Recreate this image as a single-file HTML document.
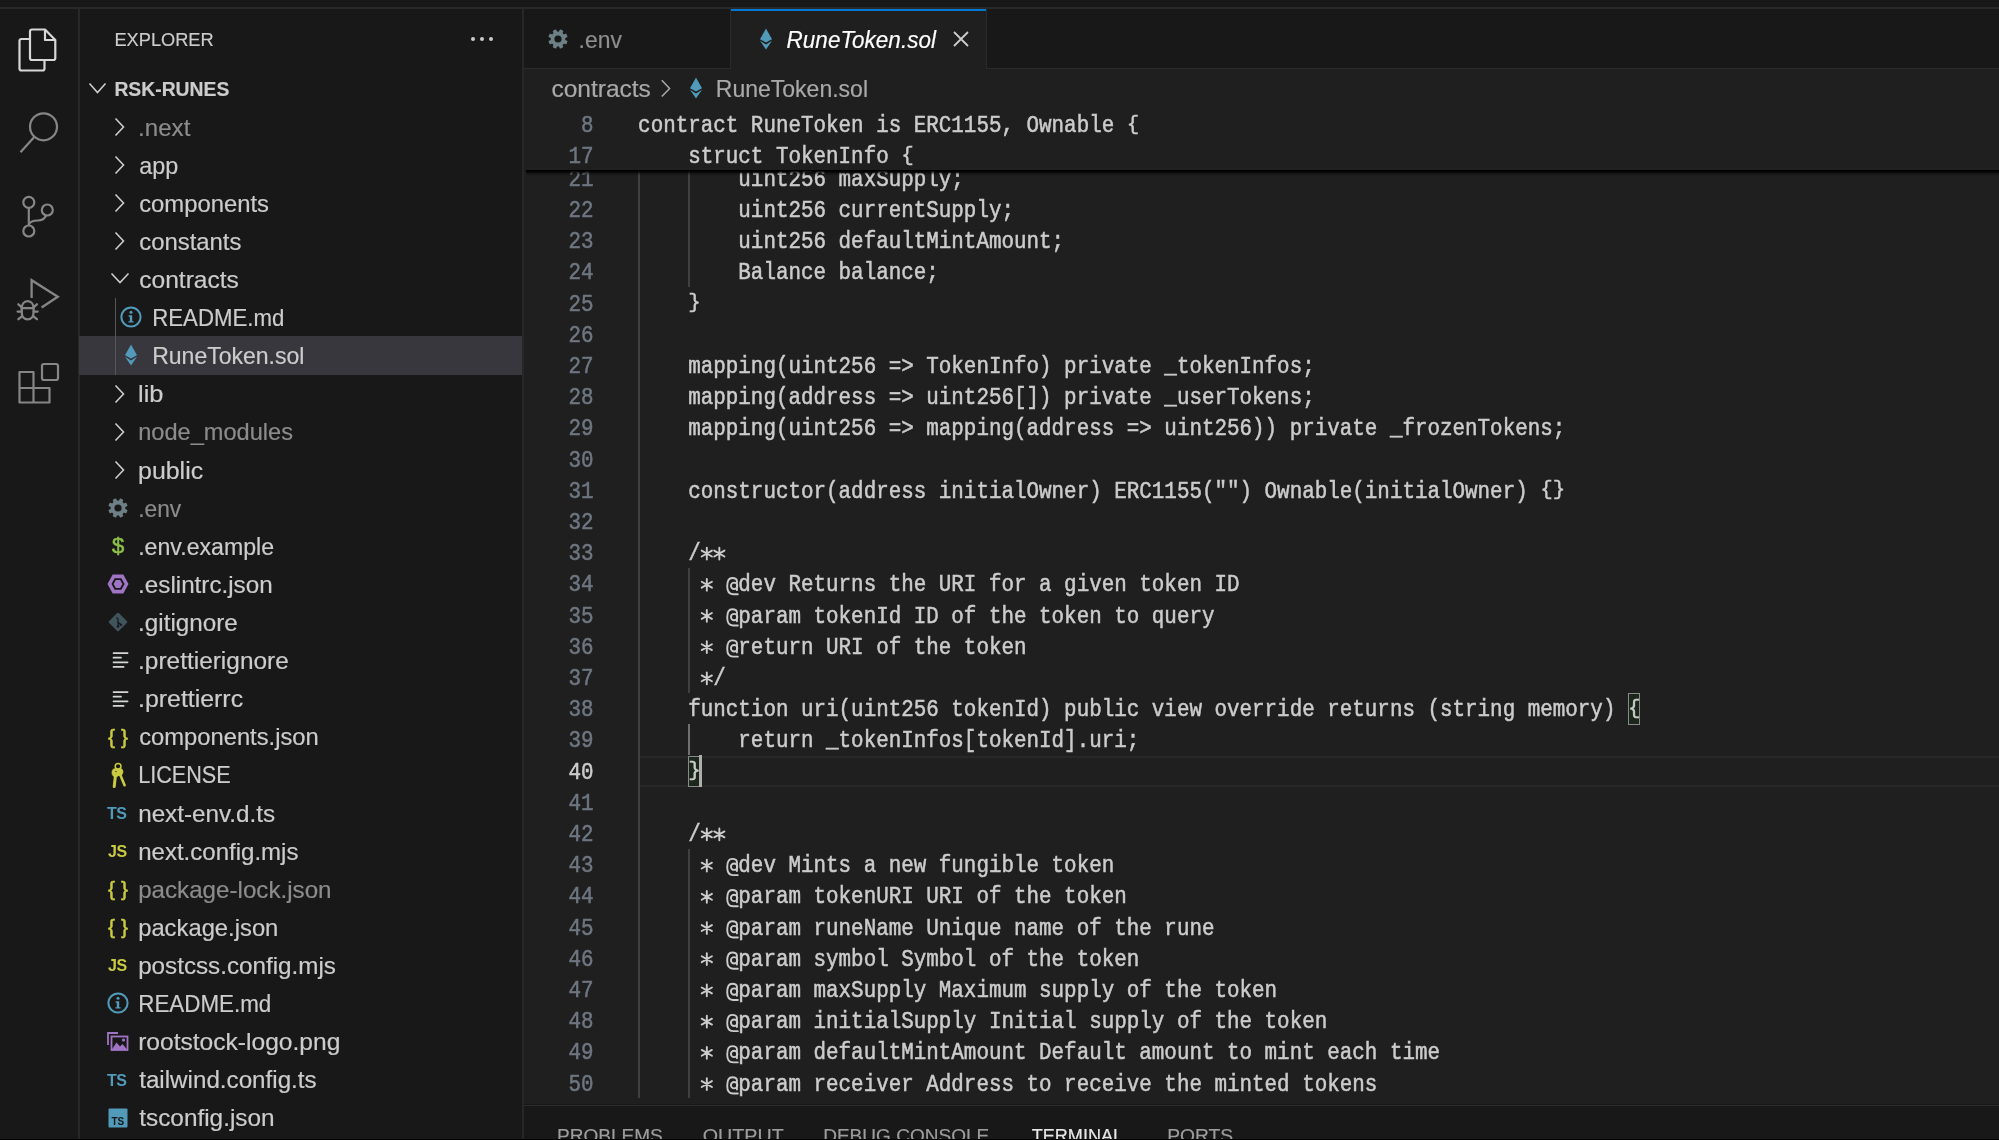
<!DOCTYPE html><html><head><meta charset="utf-8"><style>
*{margin:0;padding:0;box-sizing:border-box}
html,body{width:1999px;height:1140px;overflow:hidden;background:#181818}
#wrap{position:absolute;left:0;top:0;width:1999px;height:1140px;will-change:transform;overflow:hidden}
.a{position:absolute}
svg{position:absolute;left:0;top:0;overflow:visible}
text{font-family:"Liberation Sans",sans-serif}
text.m{font-family:"Liberation Mono",monospace;white-space:pre;stroke:currentColor;stroke-width:0.45px}
text.s{stroke:currentColor;stroke-width:0.18px}
</style></head><body><div id="wrap"><div class="a" style="left:0px;top:0px;width:1999px;height:7px;background:#181818;"></div>
<div class="a" style="left:0px;top:7px;width:1999px;height:2px;background:#292929;"></div>
<div class="a" style="left:78px;top:9px;width:1.6px;height:1131px;background:#282828;"></div>
<div class="a" style="left:522.1px;top:9px;width:1.7px;height:1131px;background:#272727;"></div>
<div class="a" style="left:524px;top:69px;width:1475px;height:1035px;background:#1f1f1f;"></div>
<div class="a" style="left:524px;top:67.6px;width:1475px;height:1.6px;background:#2b2b2b;"></div>
<div class="a" style="left:731px;top:9px;width:255px;height:60px;background:#1f1f1f;border-top:2px solid #0078d4"></div>
<div class="a" style="left:730px;top:9px;width:1.4px;height:59px;background:#2b2b2b;"></div>
<div class="a" style="left:985.5px;top:9px;width:1.4px;height:59px;background:#2b2b2b;"></div>
<div class="a" style="left:524px;top:1104.6px;width:1475px;height:36px;background:#181818;border-top:1.4px solid #2e2e2e"></div>
<div class="a" style="left:79px;top:336.4px;width:443.2px;height:38.2px;background:#37373d;"></div>
<div class="a" style="left:114.6px;top:298.3px;width:1.4px;height:76.3px;background:#585858;"></div>
<div class="a" style="left:639px;top:755.5725px;width:1360px;height:31.407px;background:transparent;border-top:2px solid #282828;border-bottom:2px solid #282828"></div>
<div class="a" style="left:637.8px;top:162.04px;width:1.8px;height:936.21px;background:#404040;"></div>
<div class="a" style="left:687.92px;top:162.04px;width:1.8px;height:124.83px;background:#404040;"></div>
<div class="a" style="left:687.92px;top:567.73px;width:1.8px;height:124.83px;background:#404040;"></div>
<div class="a" style="left:687.92px;top:723.77px;width:1.8px;height:31.21px;background:#707070;"></div>
<div class="a" style="left:687.92px;top:848.59px;width:1.8px;height:249.66px;background:#404040;"></div>
<div class="a" style="left:688.224px;top:755.5725px;width:13.9px;height:31.607px;background:#1b271b;border:1.8px solid #8a8a8a"></div>
<div class="a" style="left:1628.049px;top:693.4585px;width:12.3px;height:31.307000000000002px;background:#1b271b;border:1.8px solid #8a8a8a"></div>
<svg class="a" style="left:0px;top:0px" width="79" height="440" viewBox="0 0 79 440">
<g fill="none" stroke="#d7d7d7" stroke-width="2.2" stroke-linejoin="round">
 <path d="M30 39 H21.5 Q19.5 39 19.5 41 V68.5 Q19.5 70.5 21.5 70.5 H42.5 Q44.5 70.5 44.5 68.5 V60"/>
 <path d="M32 29.5 H45 L55.3 40 V58 Q55.3 60 53.3 60 H32 Q30 60 30 58 V31.5 Q30 29.5 32 29.5 Z"/>
 <path d="M45 29.5 V40 H55.3"/>
</g>
<g fill="none" stroke="#868686" stroke-width="2.2">
 <circle cx="43.5" cy="126.8" r="13.5"/>
 <path d="M34 137.2 L20.5 152.2"/>
</g>
<g fill="none" stroke="#868686" stroke-width="2.2">
 <circle cx="28.8" cy="202.3" r="5.5"/>
 <circle cx="47.3" cy="210" r="5.5"/>
 <circle cx="28.8" cy="231" r="5.5"/>
 <path d="M28.8 207.8 V225.5"/>
 <path d="M46 215.5 Q44 220.5 38 220.5 Q30 220.5 28.8 225"/>
</g>
<g fill="none" stroke="#868686" stroke-width="2.3" stroke-linejoin="miter" stroke-linecap="round">
 <path d="M31.6 298 V280.2 L57.8 296.8 L41.6 307.5" stroke-linecap="butt"/>
 <path d="M27.65 301.2 C31.5 301.2 33.6 304.5 33.6 308.5 V312 C33.6 316.8 31 319.4 27.65 319.4 C24.3 319.4 21.7 316.8 21.7 312 V308.5 C21.7 304.5 23.8 301.2 27.65 301.2 Z"/>
 <path d="M21.7 308.1 H33.6"/>
 <path d="M18.4 304.3 L21.6 307.2 M36.9 304.3 L33.7 307.2 M17.6 311.6 H21.6 M37.7 311.6 H33.7 M18.4 319.2 L21.9 316.3 M36.9 319.2 L33.4 316.3"/>
</g>
<g fill="none" stroke="#868686" stroke-width="2.2" stroke-linejoin="round">
 <path d="M19.5 372 H33.5 V388 H49.5 V402.5 H19.5 Z"/>
 <path d="M19.5 388 H33.5 V402.5"/>
 <rect x="42" y="364" width="16" height="16" rx="2"/>
</g>
</svg>
<div class="a" style="left:471.2px;top:37px;width:4px;height:4px;border-radius:2px;background:#cccccc"></div>
<div class="a" style="left:480px;top:37px;width:4px;height:4px;border-radius:2px;background:#cccccc"></div>
<div class="a" style="left:488.8px;top:37px;width:4px;height:4px;border-radius:2px;background:#cccccc"></div>
<svg class="a" style="left:88px;top:82.2px" width="19" height="14" viewBox="0 0 19 14"><path d="M1.5 1.5 L9.5 10.5 L17.5 1.5" fill="none" stroke="#cccccc" stroke-width="1.6"/></svg>
<svg class="a" style="left:114px;top:116.89px" width="12" height="20" viewBox="0 0 12 20"><path d="M1.5 1.5 L9.5 10 L1.5 18.5" fill="none" stroke="#cccccc" stroke-width="1.6"/></svg>
<svg class="a" style="left:114px;top:155.0px" width="12" height="20" viewBox="0 0 12 20"><path d="M1.5 1.5 L9.5 10 L1.5 18.5" fill="none" stroke="#cccccc" stroke-width="1.6"/></svg>
<svg class="a" style="left:114px;top:193.11px" width="12" height="20" viewBox="0 0 12 20"><path d="M1.5 1.5 L9.5 10 L1.5 18.5" fill="none" stroke="#cccccc" stroke-width="1.6"/></svg>
<svg class="a" style="left:114px;top:231.22px" width="12" height="20" viewBox="0 0 12 20"><path d="M1.5 1.5 L9.5 10 L1.5 18.5" fill="none" stroke="#cccccc" stroke-width="1.6"/></svg>
<svg class="a" style="left:110px;top:272.33px" width="20" height="14" viewBox="0 0 20 14"><path d="M1.5 1.5 L10.0 10.5 L18.5 1.5" fill="none" stroke="#cccccc" stroke-width="1.6"/></svg>
<svg class="a" style="left:119px;top:305.44px" width="24" height="24" viewBox="0 0 24 24"><circle cx="12" cy="12" r="9.6" fill="none" stroke="#519aba" stroke-width="2"/><circle cx="12" cy="7.3" r="1.5" fill="#519aba"/><path d="M9.6 10.3 H13.2 V16.2 H14.6 V17.6 H9.4 V16.2 H10.8 V11.7 H9.6 Z" fill="#519aba"/></svg>
<svg class="a" style="left:124.0px;top:343.55px" width="14" height="22" viewBox="0 0 14 22"><path d="M7 0.5 L13 11.2 L7 14.6 L1 11.2 Z" fill="#519aba"/><path d="M1 12.8 L7 16.4 L13 12.8 L7 21.5 Z" fill="#519aba"/></svg>
<svg class="a" style="left:114px;top:383.65999999999997px" width="12" height="20" viewBox="0 0 12 20"><path d="M1.5 1.5 L9.5 10 L1.5 18.5" fill="none" stroke="#cccccc" stroke-width="1.6"/></svg>
<svg class="a" style="left:114px;top:421.77px" width="12" height="20" viewBox="0 0 12 20"><path d="M1.5 1.5 L9.5 10 L1.5 18.5" fill="none" stroke="#cccccc" stroke-width="1.6"/></svg>
<svg class="a" style="left:114px;top:459.88px" width="12" height="20" viewBox="0 0 12 20"><path d="M1.5 1.5 L9.5 10 L1.5 18.5" fill="none" stroke="#cccccc" stroke-width="1.6"/></svg>
<svg class="a" style="left:105.5px;top:495.99px" width="24" height="24" viewBox="0 0 24 24"><g fill="#6d8086"><rect x="10.1" y="2.3" width="3.8" height="6" rx="0.8" transform="rotate(22.5 12 12)"/><rect x="10.1" y="2.3" width="3.8" height="6" rx="0.8" transform="rotate(67.5 12 12)"/><rect x="10.1" y="2.3" width="3.8" height="6" rx="0.8" transform="rotate(112.5 12 12)"/><rect x="10.1" y="2.3" width="3.8" height="6" rx="0.8" transform="rotate(157.5 12 12)"/><rect x="10.1" y="2.3" width="3.8" height="6" rx="0.8" transform="rotate(202.5 12 12)"/><rect x="10.1" y="2.3" width="3.8" height="6" rx="0.8" transform="rotate(247.5 12 12)"/><rect x="10.1" y="2.3" width="3.8" height="6" rx="0.8" transform="rotate(292.5 12 12)"/><rect x="10.1" y="2.3" width="3.8" height="6" rx="0.8" transform="rotate(337.5 12 12)"/><circle cx="12" cy="12" r="7.4"/></g><circle cx="12" cy="12" r="3.6" fill="#181818"/></svg>
<svg class="a" style="left:107.5px;top:532.1px" width="20" height="28" viewBox="0 0 20 28"><text x="10" y="20.5" text-anchor="middle" font-size="22" fill="#8dc149" stroke="#8dc149" stroke-width="0.6">$</text></svg>
<svg class="a" style="left:105.5px;top:573.21px" width="24" height="22" viewBox="0 0 24 22"><polygon points="1.5,11 6.7,1.5 17.3,1.5 22.5,11 17.3,20.5 6.7,20.5" fill="#a074c4"/><polygon points="6.5,11 9.2,6.2 14.8,6.2 17.5,11 14.8,15.8 9.2,15.8" fill="#a074c4" stroke="#181818" stroke-width="1.8"/></svg>
<svg class="a" style="left:106.5px;top:611.3199999999999px" width="22" height="22" viewBox="0 0 22 22"><rect x="4" y="4" width="14" height="14" rx="1.5" transform="rotate(45 11 11)" fill="#41535b"/><path d="M9.5 6.5 L11 8 V15.5 M11 11 L13.5 13.5" stroke="#181818" stroke-width="1.2" fill="none"/><circle cx="11" cy="15.5" r="1.3" fill="#181818"/><circle cx="13.8" cy="13.8" r="1.3" fill="#181818"/></svg>
<svg class="a" style="left:111.5px;top:650.4300000000001px" width="20" height="20" viewBox="0 0 20 20"><g stroke="#d4d7d6" stroke-width="1.7" stroke-linecap="round"><path d="M1.5 3.1 H15.6"/><path d="M1.5 7.7 H9"/><path d="M1.5 12.3 H15.6"/><path d="M1.5 16.9 H11.6"/></g></svg>
<svg class="a" style="left:111.5px;top:688.54px" width="20" height="20" viewBox="0 0 20 20"><g stroke="#d4d7d6" stroke-width="1.7" stroke-linecap="round"><path d="M1.5 3.1 H15.6"/><path d="M1.5 7.7 H9"/><path d="M1.5 12.3 H15.6"/><path d="M1.5 16.9 H11.6"/></g></svg>
<svg class="a" style="left:105.5px;top:722.65px" width="24" height="28" viewBox="0 0 24 28"><text x="12" y="20.5" text-anchor="middle" font-size="21" fill="#cbcb41" stroke="#cbcb41" stroke-width="0.5">{ }</text></svg>
<svg class="a" style="left:105.5px;top:760.76px" width="24" height="28" viewBox="0 0 24 28"><g fill="#cbcb41" stroke="#cbcb41" stroke-linecap="round"><circle cx="12.1" cy="5.3" r="2.9" fill="none" stroke-width="1.5"/><ellipse cx="13.7" cy="10.8" rx="3.3" ry="3.6" stroke-width="0.5"/><path d="M13.5 12 L18.6 24.2" stroke-width="2.6"/><ellipse cx="9.8" cy="11.6" rx="3.9" ry="4.2" stroke-width="0.5"/><path d="M9.6 13 L8.2 25.6" stroke-width="3"/></g><path d="M10 10.6 h0.01" stroke="#181818" stroke-width="1.4" stroke-linecap="round"/></svg>
<svg class="a" style="left:106.5px;top:798.87px" width="24" height="28" viewBox="0 0 24 28"><text x="0" y="20" font-size="16" font-weight="bold" letter-spacing="-0.5" fill="#519aba">TS</text></svg>
<svg class="a" style="left:107.5px;top:836.98px" width="24" height="28" viewBox="0 0 24 28"><text x="0" y="20" font-size="16" font-weight="bold" letter-spacing="-0.5" fill="#cbcb41">JS</text></svg>
<svg class="a" style="left:105.5px;top:875.09px" width="24" height="28" viewBox="0 0 24 28"><text x="12" y="20.5" text-anchor="middle" font-size="21" fill="#cbcb41" stroke="#cbcb41" stroke-width="0.5">{ }</text></svg>
<svg class="a" style="left:105.5px;top:913.2px" width="24" height="28" viewBox="0 0 24 28"><text x="12" y="20.5" text-anchor="middle" font-size="21" fill="#cbcb41" stroke="#cbcb41" stroke-width="0.5">{ }</text></svg>
<svg class="a" style="left:107.5px;top:951.31px" width="24" height="28" viewBox="0 0 24 28"><text x="0" y="20" font-size="16" font-weight="bold" letter-spacing="-0.5" fill="#cbcb41">JS</text></svg>
<svg class="a" style="left:105.5px;top:991.42px" width="24" height="24" viewBox="0 0 24 24"><circle cx="12" cy="12" r="9.6" fill="none" stroke="#519aba" stroke-width="2"/><circle cx="12" cy="7.3" r="1.5" fill="#519aba"/><path d="M9.6 10.3 H13.2 V16.2 H14.6 V17.6 H9.4 V16.2 H10.8 V11.7 H9.6 Z" fill="#519aba"/></svg>
<svg class="a" style="left:106.5px;top:1031.53px" width="22" height="20" viewBox="0 0 22 20"><path d="M1 13 V1 H11" fill="none" stroke="#a074c4" stroke-width="1.8"/><rect x="4.5" y="4.5" width="16" height="13.5" fill="none" stroke="#a074c4" stroke-width="1.8"/><path d="M4.5 18 L9.5 10.5 L13 14.5 L15.5 12 L20.5 18 Z" fill="#a074c4"/><circle cx="16.5" cy="8" r="1.6" fill="#a074c4"/></svg>
<svg class="a" style="left:106.5px;top:1065.6399999999999px" width="24" height="28" viewBox="0 0 24 28"><text x="0" y="20" font-size="16" font-weight="bold" letter-spacing="-0.5" fill="#519aba">TS</text></svg>
<svg class="a" style="left:107.5px;top:1107.75px" width="20" height="20" viewBox="0 0 20 20"><rect x="0.5" y="0.5" width="19" height="19" rx="1" fill="#519aba"/><text x="3.5" y="17" font-weight="bold" font-size="10" fill="#181818">TS</text></svg>
<svg class="a" style="left:545.7px;top:26.5px" width="24" height="24" viewBox="0 0 24 24"><g fill="#6d8086"><rect x="10.1" y="2.3" width="3.8" height="6" rx="0.8" transform="rotate(22.5 12 12)"/><rect x="10.1" y="2.3" width="3.8" height="6" rx="0.8" transform="rotate(67.5 12 12)"/><rect x="10.1" y="2.3" width="3.8" height="6" rx="0.8" transform="rotate(112.5 12 12)"/><rect x="10.1" y="2.3" width="3.8" height="6" rx="0.8" transform="rotate(157.5 12 12)"/><rect x="10.1" y="2.3" width="3.8" height="6" rx="0.8" transform="rotate(202.5 12 12)"/><rect x="10.1" y="2.3" width="3.8" height="6" rx="0.8" transform="rotate(247.5 12 12)"/><rect x="10.1" y="2.3" width="3.8" height="6" rx="0.8" transform="rotate(292.5 12 12)"/><rect x="10.1" y="2.3" width="3.8" height="6" rx="0.8" transform="rotate(337.5 12 12)"/><circle cx="12" cy="12" r="7.4"/></g><circle cx="12" cy="12" r="3.6" fill="#181818"/></svg>
<svg class="a" style="left:759px;top:27.5px" width="14" height="22" viewBox="0 0 14 22"><path d="M7 0.5 L13 11.2 L7 14.6 L1 11.2 Z" fill="#519aba"/><path d="M1 12.8 L7 16.4 L13 12.8 L7 21.5 Z" fill="#519aba"/></svg>
<svg class="a" style="left:951px;top:29px" width="20" height="20" viewBox="0 0 20 20"><path d="M3 3 L17 17 M17 3 L3 17" stroke="#cccccc" stroke-width="1.8"/></svg>
<svg class="a" style="left:660px;top:78px" width="12" height="20" viewBox="0 0 12 20"><path d="M1.8 2.2 L9.6 10.4 L1.8 18.6" fill="none" stroke="#a9a9a9" stroke-width="1.5"/></svg>
<svg class="a" style="left:688.8px;top:77px" width="14" height="22" viewBox="0 0 14 22"><path d="M7 0.5 L13 11.2 L7 14.6 L1 11.2 Z" fill="#519aba"/><path d="M1 12.8 L7 16.4 L13 12.8 L7 21.5 Z" fill="#519aba"/></svg>
<svg class="a" width="1999" height="1140"><text transform="translate(114.41 95.60) scale(0.9920 1.0)" font-size="19.5" font-weight="bold" font-style="normal" fill="#cccccc" class="s" style="color:#cccccc">RSK-RUNES</text><text transform="translate(138.11 135.59) scale(1.0481 1.0)" font-size="23" font-weight="normal" font-style="normal" fill="#8c8c8c" class="s" style="color:#8c8c8c">.next</text><text transform="translate(139.20 173.70) scale(1.0164 1.0)" font-size="23" font-weight="normal" font-style="normal" fill="#cccccc" class="s" style="color:#cccccc">app</text><text transform="translate(139.20 211.81) scale(1.0369 1.0)" font-size="23" font-weight="normal" font-style="normal" fill="#cccccc" class="s" style="color:#cccccc">components</text><text transform="translate(139.20 249.92) scale(1.0394 1.0)" font-size="23" font-weight="normal" font-style="normal" fill="#cccccc" class="s" style="color:#cccccc">constants</text><text transform="translate(139.20 288.03) scale(1.0689 1.0)" font-size="23" font-weight="normal" font-style="normal" fill="#cccccc" class="s" style="color:#cccccc">contracts</text><text transform="translate(152.23 326.14) scale(0.9663 1.0)" font-size="23" font-weight="normal" font-style="normal" fill="#cccccc" class="s" style="color:#cccccc">README.md</text><text transform="translate(152.20 364.25) scale(1.0011 1.0)" font-size="23" font-weight="normal" font-style="normal" fill="#cccccc" class="s" style="color:#cccccc">RuneToken.sol</text><text transform="translate(138.08 402.36) scale(1.1038 1.0)" font-size="23" font-weight="normal" font-style="normal" fill="#cccccc" class="s" style="color:#cccccc">lib</text><text transform="translate(138.17 440.47) scale(1.0268 1.0)" font-size="23" font-weight="normal" font-style="normal" fill="#8c8c8c" class="s" style="color:#8c8c8c">node_modules</text><text transform="translate(138.11 478.58) scale(1.0822 1.0)" font-size="23" font-weight="normal" font-style="normal" fill="#cccccc" class="s" style="color:#cccccc">public</text><text transform="translate(138.21 516.69) scale(0.9911 1.0)" font-size="23" font-weight="normal" font-style="normal" fill="#8c8c8c" class="s" style="color:#8c8c8c">.env</text><text transform="translate(138.18 554.80) scale(1.0068 1.0)" font-size="23" font-weight="normal" font-style="normal" fill="#cccccc" class="s" style="color:#cccccc">.env.example</text><text transform="translate(138.10 592.91) scale(1.0525 1.0)" font-size="23" font-weight="normal" font-style="normal" fill="#cccccc" class="s" style="color:#cccccc">.eslintrc.json</text><text transform="translate(138.08 631.02) scale(1.0543 1.0)" font-size="23" font-weight="normal" font-style="normal" fill="#cccccc" class="s" style="color:#cccccc">.gitignore</text><text transform="translate(138.07 669.13) scale(1.0624 1.0)" font-size="23" font-weight="normal" font-style="normal" fill="#cccccc" class="s" style="color:#cccccc">.prettierignore</text><text transform="translate(138.03 707.24) scale(1.0821 1.0)" font-size="23" font-weight="normal" font-style="normal" fill="#cccccc" class="s" style="color:#cccccc">.prettierrc</text><text transform="translate(139.20 745.35) scale(1.0330 1.0)" font-size="23" font-weight="normal" font-style="normal" fill="#cccccc" class="s" style="color:#cccccc">components.json</text><text transform="translate(138.26 783.46) scale(0.9394 1.0)" font-size="23" font-weight="normal" font-style="normal" fill="#cccccc" class="s" style="color:#cccccc">LICENSE</text><text transform="translate(138.14 821.57) scale(1.0555 1.0)" font-size="23" font-weight="normal" font-style="normal" fill="#cccccc" class="s" style="color:#cccccc">next-env.d.ts</text><text transform="translate(138.15 859.68) scale(1.0455 1.0)" font-size="23" font-weight="normal" font-style="normal" fill="#cccccc" class="s" style="color:#cccccc">next.config.mjs</text><text transform="translate(138.15 897.79) scale(1.0510 1.0)" font-size="23" font-weight="normal" font-style="normal" fill="#8c8c8c" class="s" style="color:#8c8c8c">package-lock.json</text><text transform="translate(138.16 935.90) scale(1.0349 1.0)" font-size="23" font-weight="normal" font-style="normal" fill="#cccccc" class="s" style="color:#cccccc">package.json</text><text transform="translate(138.15 974.01) scale(1.0526 1.0)" font-size="23" font-weight="normal" font-style="normal" fill="#cccccc" class="s" style="color:#cccccc">postcss.config.mjs</text><text transform="translate(138.22 1012.12) scale(0.9738 1.0)" font-size="23" font-weight="normal" font-style="normal" fill="#cccccc" class="s" style="color:#cccccc">README.md</text><text transform="translate(138.13 1050.23) scale(1.0692 1.0)" font-size="23" font-weight="normal" font-style="normal" fill="#cccccc" class="s" style="color:#cccccc">rootstock-logo.png</text><text transform="translate(139.20 1088.34) scale(1.0520 1.0)" font-size="23" font-weight="normal" font-style="normal" fill="#cccccc" class="s" style="color:#cccccc">tailwind.config.ts</text><text transform="translate(139.20 1126.45) scale(1.0595 1.0)" font-size="23" font-weight="normal" font-style="normal" fill="#cccccc" class="s" style="color:#cccccc">tsconfig.json</text><text transform="translate(114.44 46.00) scale(0.9591 1.0)" font-size="19" font-weight="normal" font-style="normal" fill="#cccccc" class="s" style="color:#cccccc">EXPLORER</text><text transform="translate(578.61 47.80) scale(0.9960 1.0)" font-size="23" font-weight="normal" font-style="normal" fill="#8e8e8e" class="s" style="color:#8e8e8e">.env</text><text transform="translate(786.60 47.80) scale(0.9787 1.0)" font-size="23" font-weight="normal" font-style="italic" fill="#ffffff" class="s" style="color:#ffffff">RuneToken.sol</text><text transform="translate(551.39 97.20) scale(1.0668 1.0)" font-size="23" font-weight="normal" font-style="normal" fill="#a9a9a9" class="s" style="color:#a9a9a9">contracts</text><text transform="translate(715.79 97.20) scale(1.0012 1.0)" font-size="23" font-weight="normal" font-style="normal" fill="#a9a9a9" class="s" style="color:#a9a9a9">RuneToken.sol</text><text transform="translate(556.97 1141.60) scale(1.0309 1.0)" font-size="18.5" font-weight="normal" font-style="normal" fill="#9d9d9d" class="s" style="color:#9d9d9d">PROBLEMS</text><text transform="translate(702.78 1141.60) scale(1.0643 1.0)" font-size="18.5" font-weight="normal" font-style="normal" fill="#9d9d9d" class="s" style="color:#9d9d9d">OUTPUT</text><text transform="translate(823.17 1141.60) scale(1.0297 1.0)" font-size="18.5" font-weight="normal" font-style="normal" fill="#9d9d9d" class="s" style="color:#9d9d9d">DEBUG CONSOLE</text><text transform="translate(1031.70 1141.60) scale(0.9780 1.0)" font-size="18.5" font-weight="normal" font-style="normal" fill="#e7e7e7" class="s" style="color:#e7e7e7">TERMINAL</text><text transform="translate(1167.15 1141.60) scale(1.0412 1.0)" font-size="18.5" font-weight="normal" font-style="normal" fill="#9d9d9d" class="s" style="color:#9d9d9d">PORTS</text></svg>
<svg class="a" width="1999" height="1140"><text transform="translate(593.5 185.69) scale(1 1.15)" class="m" font-size="20.885" text-anchor="end" fill="#6e7681" style="color:#6e7681">21</text><text transform="translate(638.1 185.69) scale(1 1.15)" class="m" font-size="20.885" fill="#cccccc" style="color:#cccccc" xml:space="preserve">        uint256 maxSupply;</text><text transform="translate(593.5 216.90) scale(1 1.15)" class="m" font-size="20.885" text-anchor="end" fill="#6e7681" style="color:#6e7681">22</text><text transform="translate(638.1 216.90) scale(1 1.15)" class="m" font-size="20.885" fill="#cccccc" style="color:#cccccc" xml:space="preserve">        uint256 currentSupply;</text><text transform="translate(593.5 248.11) scale(1 1.15)" class="m" font-size="20.885" text-anchor="end" fill="#6e7681" style="color:#6e7681">23</text><text transform="translate(638.1 248.11) scale(1 1.15)" class="m" font-size="20.885" fill="#cccccc" style="color:#cccccc" xml:space="preserve">        uint256 defaultMintAmount;</text><text transform="translate(593.5 279.31) scale(1 1.15)" class="m" font-size="20.885" text-anchor="end" fill="#6e7681" style="color:#6e7681">24</text><text transform="translate(638.1 279.31) scale(1 1.15)" class="m" font-size="20.885" fill="#cccccc" style="color:#cccccc" xml:space="preserve">        Balance balance;</text><text transform="translate(593.5 310.52) scale(1 1.15)" class="m" font-size="20.885" text-anchor="end" fill="#6e7681" style="color:#6e7681">25</text><text transform="translate(688.22 308.02) scale(1 0.937)" class="m" font-size="20.885" fill="#cccccc" style="color:#cccccc">}</text><text transform="translate(638.1 310.52) scale(1 1.15)" class="m" font-size="20.885" fill="#cccccc" style="color:#cccccc" xml:space="preserve">     </text><text transform="translate(593.5 341.73) scale(1 1.15)" class="m" font-size="20.885" text-anchor="end" fill="#6e7681" style="color:#6e7681">26</text><text transform="translate(593.5 372.94) scale(1 1.15)" class="m" font-size="20.885" text-anchor="end" fill="#6e7681" style="color:#6e7681">27</text><text transform="translate(638.1 372.94) scale(1 1.15)" class="m" font-size="20.885" fill="#cccccc" style="color:#cccccc" xml:space="preserve">    mapping(uint256 =&gt; TokenInfo) private _tokenInfos;</text><text transform="translate(593.5 404.14) scale(1 1.15)" class="m" font-size="20.885" text-anchor="end" fill="#6e7681" style="color:#6e7681">28</text><text transform="translate(638.1 404.14) scale(1 1.15)" class="m" font-size="20.885" fill="#cccccc" style="color:#cccccc" xml:space="preserve">    mapping(address =&gt; uint256[]) private _userTokens;</text><text transform="translate(593.5 435.35) scale(1 1.15)" class="m" font-size="20.885" text-anchor="end" fill="#6e7681" style="color:#6e7681">29</text><text transform="translate(638.1 435.35) scale(1 1.15)" class="m" font-size="20.885" fill="#cccccc" style="color:#cccccc" xml:space="preserve">    mapping(uint256 =&gt; mapping(address =&gt; uint256)) private _frozenTokens;</text><text transform="translate(593.5 466.56) scale(1 1.15)" class="m" font-size="20.885" text-anchor="end" fill="#6e7681" style="color:#6e7681">30</text><text transform="translate(593.5 497.76) scale(1 1.15)" class="m" font-size="20.885" text-anchor="end" fill="#6e7681" style="color:#6e7681">31</text><text transform="translate(1540.33 495.26) scale(1 0.937)" class="m" font-size="20.885" fill="#cccccc" style="color:#cccccc">{</text><text transform="translate(1552.86 495.26) scale(1 0.937)" class="m" font-size="20.885" fill="#cccccc" style="color:#cccccc">}</text><text transform="translate(638.1 497.76) scale(1 1.15)" class="m" font-size="20.885" fill="#cccccc" style="color:#cccccc" xml:space="preserve">    constructor(address initialOwner) ERC1155(&quot;&quot;) Ownable(initialOwner)   </text><text transform="translate(593.5 528.97) scale(1 1.15)" class="m" font-size="20.885" text-anchor="end" fill="#6e7681" style="color:#6e7681">32</text><text transform="translate(593.5 560.18) scale(1 1.15)" class="m" font-size="20.885" text-anchor="end" fill="#6e7681" style="color:#6e7681">33</text><text transform="translate(638.1 560.18) scale(1 1.15)" class="m" font-size="20.885" fill="#cccccc" style="color:#cccccc" xml:space="preserve">    /  </text><path d="M706.82 547.63V559.43M701.72 550.58L711.92 556.48M701.72 556.48L711.92 550.58M719.35 547.63V559.43M714.25 550.58L724.45 556.48M714.25 556.48L724.45 550.58" stroke="#cccccc" stroke-width="1.9" stroke-linecap="round" fill="none"/><text transform="translate(593.5 591.38) scale(1 1.15)" class="m" font-size="20.885" text-anchor="end" fill="#6e7681" style="color:#6e7681">34</text><text transform="translate(638.1 591.38) scale(1 1.15)" class="m" font-size="20.885" fill="#cccccc" style="color:#cccccc" xml:space="preserve">        dev Returns the URI for a given token ID</text><path d="M706.82 578.83V590.63M701.72 581.78L711.92 587.68M701.72 587.68L711.92 581.78" stroke="#cccccc" stroke-width="1.9" stroke-linecap="round" fill="none"/><path d="M737.02 581.33C736.82 579.03 734.82 577.98 732.22 577.98C728.92 577.98 727.22 581.33 727.22 586.33C727.22 591.63 729.52 594.23 733.02 594.23L737.82 594.23M736.92 580.93V590.13" stroke="#cccccc" stroke-width="1.9" stroke-linecap="round" fill="none"/><circle cx="734.12" cy="585.83" r="3.2" stroke="#cccccc" stroke-width="1.9" fill="none"/><text transform="translate(593.5 622.59) scale(1 1.15)" class="m" font-size="20.885" text-anchor="end" fill="#6e7681" style="color:#6e7681">35</text><text transform="translate(638.1 622.59) scale(1 1.15)" class="m" font-size="20.885" fill="#cccccc" style="color:#cccccc" xml:space="preserve">        param tokenId ID of the token to query</text><path d="M706.82 610.04V621.84M701.72 612.99L711.92 618.89M701.72 618.89L711.92 612.99" stroke="#cccccc" stroke-width="1.9" stroke-linecap="round" fill="none"/><path d="M737.02 612.54C736.82 610.24 734.82 609.19 732.22 609.19C728.92 609.19 727.22 612.54 727.22 617.54C727.22 622.84 729.52 625.44 733.02 625.44L737.82 625.44M736.92 612.14V621.34" stroke="#cccccc" stroke-width="1.9" stroke-linecap="round" fill="none"/><circle cx="734.12" cy="617.04" r="3.2" stroke="#cccccc" stroke-width="1.9" fill="none"/><text transform="translate(593.5 653.80) scale(1 1.15)" class="m" font-size="20.885" text-anchor="end" fill="#6e7681" style="color:#6e7681">36</text><text transform="translate(638.1 653.80) scale(1 1.15)" class="m" font-size="20.885" fill="#cccccc" style="color:#cccccc" xml:space="preserve">        return URI of the token</text><path d="M706.82 641.25V653.05M701.72 644.20L711.92 650.10M701.72 650.10L711.92 644.20" stroke="#cccccc" stroke-width="1.9" stroke-linecap="round" fill="none"/><path d="M737.02 643.75C736.82 641.45 734.82 640.40 732.22 640.40C728.92 640.40 727.22 643.75 727.22 648.75C727.22 654.05 729.52 656.65 733.02 656.65L737.82 656.65M736.92 643.35V652.55" stroke="#cccccc" stroke-width="1.9" stroke-linecap="round" fill="none"/><circle cx="734.12" cy="648.25" r="3.2" stroke="#cccccc" stroke-width="1.9" fill="none"/><text transform="translate(593.5 685.00) scale(1 1.15)" class="m" font-size="20.885" text-anchor="end" fill="#6e7681" style="color:#6e7681">37</text><text transform="translate(638.1 685.00) scale(1 1.15)" class="m" font-size="20.885" fill="#cccccc" style="color:#cccccc" xml:space="preserve">      /</text><path d="M706.82 672.45V684.25M701.72 675.40L711.92 681.30M701.72 681.30L711.92 675.40" stroke="#cccccc" stroke-width="1.9" stroke-linecap="round" fill="none"/><text transform="translate(593.5 716.21) scale(1 1.15)" class="m" font-size="20.885" text-anchor="end" fill="#6e7681" style="color:#6e7681">38</text><text transform="translate(1628.05 713.71) scale(1 0.937)" class="m" font-size="20.885" fill="#cccccc" style="color:#cccccc">{</text><text transform="translate(638.1 716.21) scale(1 1.15)" class="m" font-size="20.885" fill="#cccccc" style="color:#cccccc" xml:space="preserve">    function uri(uint256 tokenId) public view override returns (string memory)  </text><text transform="translate(593.5 747.42) scale(1 1.15)" class="m" font-size="20.885" text-anchor="end" fill="#6e7681" style="color:#6e7681">39</text><text transform="translate(638.1 747.42) scale(1 1.15)" class="m" font-size="20.885" fill="#cccccc" style="color:#cccccc" xml:space="preserve">        return _tokenInfos[tokenId].uri;</text><text transform="translate(593.5 778.63) scale(1 1.15)" class="m" font-size="20.885" text-anchor="end" fill="#cccccc" style="color:#cccccc">40</text><text transform="translate(688.22 776.13) scale(1 0.937)" class="m" font-size="20.885" fill="#cccccc" style="color:#cccccc">}</text><text transform="translate(638.1 778.63) scale(1 1.15)" class="m" font-size="20.885" fill="#cccccc" style="color:#cccccc" xml:space="preserve">     </text><text transform="translate(593.5 809.83) scale(1 1.15)" class="m" font-size="20.885" text-anchor="end" fill="#6e7681" style="color:#6e7681">41</text><text transform="translate(593.5 841.04) scale(1 1.15)" class="m" font-size="20.885" text-anchor="end" fill="#6e7681" style="color:#6e7681">42</text><text transform="translate(638.1 841.04) scale(1 1.15)" class="m" font-size="20.885" fill="#cccccc" style="color:#cccccc" xml:space="preserve">    /  </text><path d="M706.82 828.49V840.29M701.72 831.44L711.92 837.34M701.72 837.34L711.92 831.44M719.35 828.49V840.29M714.25 831.44L724.45 837.34M714.25 837.34L724.45 831.44" stroke="#cccccc" stroke-width="1.9" stroke-linecap="round" fill="none"/><text transform="translate(593.5 872.25) scale(1 1.15)" class="m" font-size="20.885" text-anchor="end" fill="#6e7681" style="color:#6e7681">43</text><text transform="translate(638.1 872.25) scale(1 1.15)" class="m" font-size="20.885" fill="#cccccc" style="color:#cccccc" xml:space="preserve">        dev Mints a new fungible token</text><path d="M706.82 859.70V871.50M701.72 862.65L711.92 868.55M701.72 868.55L711.92 862.65" stroke="#cccccc" stroke-width="1.9" stroke-linecap="round" fill="none"/><path d="M737.02 862.20C736.82 859.90 734.82 858.85 732.22 858.85C728.92 858.85 727.22 862.20 727.22 867.20C727.22 872.50 729.52 875.10 733.02 875.10L737.82 875.10M736.92 861.80V871.00" stroke="#cccccc" stroke-width="1.9" stroke-linecap="round" fill="none"/><circle cx="734.12" cy="866.70" r="3.2" stroke="#cccccc" stroke-width="1.9" fill="none"/><text transform="translate(593.5 903.45) scale(1 1.15)" class="m" font-size="20.885" text-anchor="end" fill="#6e7681" style="color:#6e7681">44</text><text transform="translate(638.1 903.45) scale(1 1.15)" class="m" font-size="20.885" fill="#cccccc" style="color:#cccccc" xml:space="preserve">        param tokenURI URI of the token</text><path d="M706.82 890.90V902.70M701.72 893.85L711.92 899.75M701.72 899.75L711.92 893.85" stroke="#cccccc" stroke-width="1.9" stroke-linecap="round" fill="none"/><path d="M737.02 893.40C736.82 891.10 734.82 890.05 732.22 890.05C728.92 890.05 727.22 893.40 727.22 898.40C727.22 903.70 729.52 906.30 733.02 906.30L737.82 906.30M736.92 893.00V902.20" stroke="#cccccc" stroke-width="1.9" stroke-linecap="round" fill="none"/><circle cx="734.12" cy="897.90" r="3.2" stroke="#cccccc" stroke-width="1.9" fill="none"/><text transform="translate(593.5 934.66) scale(1 1.15)" class="m" font-size="20.885" text-anchor="end" fill="#6e7681" style="color:#6e7681">45</text><text transform="translate(638.1 934.66) scale(1 1.15)" class="m" font-size="20.885" fill="#cccccc" style="color:#cccccc" xml:space="preserve">        param runeName Unique name of the rune</text><path d="M706.82 922.11V933.91M701.72 925.06L711.92 930.96M701.72 930.96L711.92 925.06" stroke="#cccccc" stroke-width="1.9" stroke-linecap="round" fill="none"/><path d="M737.02 924.61C736.82 922.31 734.82 921.26 732.22 921.26C728.92 921.26 727.22 924.61 727.22 929.61C727.22 934.91 729.52 937.51 733.02 937.51L737.82 937.51M736.92 924.21V933.41" stroke="#cccccc" stroke-width="1.9" stroke-linecap="round" fill="none"/><circle cx="734.12" cy="929.11" r="3.2" stroke="#cccccc" stroke-width="1.9" fill="none"/><text transform="translate(593.5 965.87) scale(1 1.15)" class="m" font-size="20.885" text-anchor="end" fill="#6e7681" style="color:#6e7681">46</text><text transform="translate(638.1 965.87) scale(1 1.15)" class="m" font-size="20.885" fill="#cccccc" style="color:#cccccc" xml:space="preserve">        param symbol Symbol of the token</text><path d="M706.82 953.32V965.12M701.72 956.27L711.92 962.17M701.72 962.17L711.92 956.27" stroke="#cccccc" stroke-width="1.9" stroke-linecap="round" fill="none"/><path d="M737.02 955.82C736.82 953.52 734.82 952.47 732.22 952.47C728.92 952.47 727.22 955.82 727.22 960.82C727.22 966.12 729.52 968.72 733.02 968.72L737.82 968.72M736.92 955.42V964.62" stroke="#cccccc" stroke-width="1.9" stroke-linecap="round" fill="none"/><circle cx="734.12" cy="960.32" r="3.2" stroke="#cccccc" stroke-width="1.9" fill="none"/><text transform="translate(593.5 997.08) scale(1 1.15)" class="m" font-size="20.885" text-anchor="end" fill="#6e7681" style="color:#6e7681">47</text><text transform="translate(638.1 997.08) scale(1 1.15)" class="m" font-size="20.885" fill="#cccccc" style="color:#cccccc" xml:space="preserve">        param maxSupply Maximum supply of the token</text><path d="M706.82 984.53V996.33M701.72 987.48L711.92 993.38M701.72 993.38L711.92 987.48" stroke="#cccccc" stroke-width="1.9" stroke-linecap="round" fill="none"/><path d="M737.02 987.03C736.82 984.73 734.82 983.68 732.22 983.68C728.92 983.68 727.22 987.03 727.22 992.03C727.22 997.33 729.52 999.93 733.02 999.93L737.82 999.93M736.92 986.63V995.83" stroke="#cccccc" stroke-width="1.9" stroke-linecap="round" fill="none"/><circle cx="734.12" cy="991.53" r="3.2" stroke="#cccccc" stroke-width="1.9" fill="none"/><text transform="translate(593.5 1028.28) scale(1 1.15)" class="m" font-size="20.885" text-anchor="end" fill="#6e7681" style="color:#6e7681">48</text><text transform="translate(638.1 1028.28) scale(1 1.15)" class="m" font-size="20.885" fill="#cccccc" style="color:#cccccc" xml:space="preserve">        param initialSupply Initial supply of the token</text><path d="M706.82 1015.73V1027.53M701.72 1018.68L711.92 1024.58M701.72 1024.58L711.92 1018.68" stroke="#cccccc" stroke-width="1.9" stroke-linecap="round" fill="none"/><path d="M737.02 1018.23C736.82 1015.93 734.82 1014.88 732.22 1014.88C728.92 1014.88 727.22 1018.23 727.22 1023.23C727.22 1028.53 729.52 1031.13 733.02 1031.13L737.82 1031.13M736.92 1017.83V1027.03" stroke="#cccccc" stroke-width="1.9" stroke-linecap="round" fill="none"/><circle cx="734.12" cy="1022.73" r="3.2" stroke="#cccccc" stroke-width="1.9" fill="none"/><text transform="translate(593.5 1059.49) scale(1 1.15)" class="m" font-size="20.885" text-anchor="end" fill="#6e7681" style="color:#6e7681">49</text><text transform="translate(638.1 1059.49) scale(1 1.15)" class="m" font-size="20.885" fill="#cccccc" style="color:#cccccc" xml:space="preserve">        param defaultMintAmount Default amount to mint each time</text><path d="M706.82 1046.94V1058.74M701.72 1049.89L711.92 1055.79M701.72 1055.79L711.92 1049.89" stroke="#cccccc" stroke-width="1.9" stroke-linecap="round" fill="none"/><path d="M737.02 1049.44C736.82 1047.14 734.82 1046.09 732.22 1046.09C728.92 1046.09 727.22 1049.44 727.22 1054.44C727.22 1059.74 729.52 1062.34 733.02 1062.34L737.82 1062.34M736.92 1049.04V1058.24" stroke="#cccccc" stroke-width="1.9" stroke-linecap="round" fill="none"/><circle cx="734.12" cy="1053.94" r="3.2" stroke="#cccccc" stroke-width="1.9" fill="none"/><text transform="translate(593.5 1090.70) scale(1 1.15)" class="m" font-size="20.885" text-anchor="end" fill="#6e7681" style="color:#6e7681">50</text><text transform="translate(638.1 1090.70) scale(1 1.15)" class="m" font-size="20.885" fill="#cccccc" style="color:#cccccc" xml:space="preserve">        param receiver Address to receive the minted tokens</text><path d="M706.82 1078.15V1089.95M701.72 1081.10L711.92 1087.00M701.72 1087.00L711.92 1081.10" stroke="#cccccc" stroke-width="1.9" stroke-linecap="round" fill="none"/><path d="M737.02 1080.65C736.82 1078.35 734.82 1077.30 732.22 1077.30C728.92 1077.30 727.22 1080.65 727.22 1085.65C727.22 1090.95 729.52 1093.55 733.02 1093.55L737.82 1093.55M736.92 1080.25V1089.45" stroke="#cccccc" stroke-width="1.9" stroke-linecap="round" fill="none"/><circle cx="734.12" cy="1085.15" r="3.2" stroke="#cccccc" stroke-width="1.9" fill="none"/></svg>
<div class="a" style="left:699.224px;top:755.4725px;width:3px;height:31.707px;background:#aeafad;"></div>
<div class="a" style="left:524px;top:108.4px;width:1475px;height:61.79999999999998px;background:#1f1f1f;"></div>
<div class="a" style="left:526px;top:170.2px;width:1473px;height:6px;background:transparent;background:linear-gradient(to bottom, #000 0px, #000 1px, rgba(0,0,0,0.75) 2px, rgba(0,0,0,0.45) 3.2px, rgba(0,0,0,0.15) 4.5px, rgba(0,0,0,0) 6px)"></div>
<svg class="a" width="1999" height="1140"><text transform="translate(593.5 132.05) scale(1 1.15)" class="m" font-size="20.885" text-anchor="end" fill="#6e7681" style="color:#6e7681">8</text><text transform="translate(1126.81 129.55) scale(1 0.937)" class="m" font-size="20.885" fill="#cccccc" style="color:#cccccc">{</text><text transform="translate(638.1 132.05) scale(1 1.15)" class="m" font-size="20.885" fill="#cccccc" style="color:#cccccc" xml:space="preserve">contract RuneToken is ERC1155, Ownable  </text><text transform="translate(593.5 163.26) scale(1 1.15)" class="m" font-size="20.885" text-anchor="end" fill="#6e7681" style="color:#6e7681">17</text><text transform="translate(901.25 160.76) scale(1 0.937)" class="m" font-size="20.885" fill="#cccccc" style="color:#cccccc">{</text><text transform="translate(638.1 163.26) scale(1 1.15)" class="m" font-size="20.885" fill="#cccccc" style="color:#cccccc" xml:space="preserve">    struct TokenInfo  </text></svg>
<div class="a" style="left:0px;top:1138.8px;width:1999px;height:1.2px;background:#000;"></div></div></body></html>
